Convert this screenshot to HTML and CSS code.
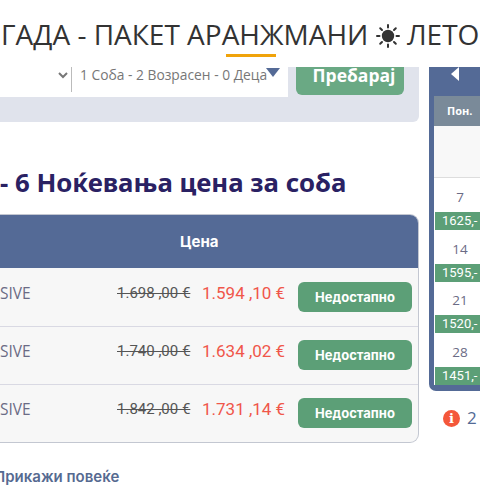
FILE: index.html
```html
<!DOCTYPE html>
<html lang="mk">
<head>
<meta charset="utf-8">
<title>Пакет аранжмани</title>
<link rel="stylesheet" href="styles.css">
</head>
<body>
<div class="page">
  <header class="title-block">
    <h1 class="title">ГАДА - ПАКЕТ АРАНЖМАНИ <svg class="sun" viewBox="0 0 24 24" width="24" height="24"><circle cx="12" cy="12" r="6.200" fill="#333"/><g stroke="#333" stroke-width="2" stroke-linecap="round"><path d="M12 1v2.500M12 20.500v2.500M1 12h2.500M20.500 12H23M4.200 4.200 6 6M18 18l1.800 1.800M4.200 19.800 6 18M18 6l1.800-1.800"/></g></svg> ЛЕТО</h1>
    <div class="title-rule"></div>
  </header>
  <div class="columns">
    <main class="main">
      <section class="search">
        <div class="search-row">
          <div class="search-field">
            <svg class="chevron" viewBox="0 0 10 7" width="10" height="7"><path d="M1 1l4 4 4-4" fill="none" stroke="#777" stroke-width="2"/></svg>
            <span class="divider"></span>
            <span class="rooms">1 Соба - 2 Возрасен - 0 Деца</span>
            <span class="triangle"></span>
          </div>
          <button class="search-btn">Пребарај</button>
        </div>
      </section>
      <h2 class="heading">- 6 Ноќевања цена за соба</h2>
      <section class="table">
        <div class="table-head"><span>Цена</span></div>
        <div class="table-row">
          <span class="board">SIVE</span>
          <span class="old">1.698 ,00 €</span>
          <span class="new">1.594 ,10 €</span>
          <button class="na">Недостапно</button>
        </div>
        <div class="table-row">
          <span class="board">SIVE</span>
          <span class="old">1.740 ,00 €</span>
          <span class="new">1.634 ,02 €</span>
          <button class="na">Недостапно</button>
        </div>
        <div class="table-row">
          <span class="board">SIVE</span>
          <span class="old">1.842 ,00 €</span>
          <span class="new">1.731 ,14 €</span>
          <button class="na">Недостапно</button>
        </div>
      </section>
      <a class="more">Прикажи повеќе</a>
    </main>
    <aside class="aside">
      <div class="calendar">
        <div class="cal-nav"><span class="arrow"></span></div>
        <div class="cal-day-name">Пон.</div>
        <div class="cal-empty"></div>
        <div class="cal-cell"><span class="num">7</span><span class="price">1625,-</span></div>
        <div class="cal-cell"><span class="num">14</span><span class="price">1595,-</span></div>
        <div class="cal-cell"><span class="num">21</span><span class="price">1520,-</span></div>
        <div class="cal-cell"><span class="num">28</span><span class="price">1451,-</span></div>
      </div>
      <div class="note">
        <span class="info">i</span>
        <span class="note-text">2</span>
      </div>
    </aside>
  </div>
</div>
</body>
</html>
```
FILE: styles.css
```css
html, body {
  margin: 0;
  padding: 0;
  background: #fff;
}
.page {
  width: 480px;
  height: 502px;
  overflow: hidden;
  font-family: "Open Sans", sans-serif;
}
.title-block {
  height: 67px;
  padding-top: 16px;
  box-sizing: border-box;
}
.title {
  margin: 0 0 0 1px;
  font-size: 28px;
  line-height: 37px;
  font-weight: 400;
  color: #333;
  white-space: nowrap;
}
.sun {
  vertical-align: -3px;
}
.title-rule {
  width: 50px;
  height: 3px;
  margin: 1px 0 0 226px;
  background: #f0a30a;
}
.columns {
  display: flex;
  gap: 10px;
  width: 480px;
}
.main {
  flex: 0 0 419px;
}
.search {
  height: 55px;
  background: #e0e3ec;
  border-bottom-right-radius: 6px;
}
.search-row {
  display: flex;
  gap: 8px;
}
.search-field {
  display: flex;
  width: 288px;
  height: 30px;
  padding: 0 7px 0 58px;
  box-sizing: border-box;
  background: #fff;
  position: relative;
}
.chevron {
  margin: 5px 3px 0 0;
}
.divider {
  width: 1px;
  height: 25px;
  background: #bbb;
}
.rooms {
  margin-left: 8px;
  font-size: 13.800px;
  line-height: 16px;
  color: #777;
  white-space: nowrap;
}
.triangle {
  position: absolute;
  left: 266px;
  top: 1px;
  border-style: solid;
  border-width: 9px 7.500px 0;
  border-color: #546a96 transparent transparent;
}
.search-btn {
  width: 108px;
  height: 28px;
  padding: 0 0 12px 8px;
  border: 0;
  border-radius: 0 0 6px 6px;
  background: #6aa984;
  color: #fff;
  font-family: "Open Sans", sans-serif;
  font-size: 17.500px;
  line-height: 16px;
  font-weight: 700;
  overflow: hidden;
}
.heading {
  margin: 43px 0 15px;
  font-family: "Noto Sans", sans-serif;
  font-size: 25.800px;
  line-height: 34px;
  font-weight: 700;
  color: #2a2163;
  white-space: nowrap;
}
.table {
  border: 1px solid #c3c7d1;
  border-left: 0;
  border-radius: 0 9px 9px 0;
  overflow: hidden;
  background: #f7f7f7;
}
.table-head {
  height: 53px;
  display: flex;
  align-items: center;
  padding-left: 180px;
  background: #546a96;
  color: #fff;
  font-family: Inter, sans-serif;
  font-size: 15px;
  font-weight: 700;
}
.table-row {
  display: flex;
  align-items: center;
  height: 58px;
  padding: 0 6px 0 0;
  box-sizing: border-box;
}
.table-row + .table-row {
  border-top: 1px solid #d9d9e3;
  padding-bottom: 1px;
}
.board {
  width: 117px;
  padding-bottom: 9px;
  font-size: 15.500px;
  color: #6b6b85;
}
.old {
  width: 85px;
  padding-bottom: 8px;
  font-family: Roboto, sans-serif;
  font-size: 15px;
  color: #555;
  text-decoration: line-through;
  white-space: nowrap;
}
.new {
  width: 96px;
  padding-bottom: 8px;
  font-family: Roboto, sans-serif;
  font-size: 17px;
  color: #f0564a;
  white-space: nowrap;
}
.na {
  width: 114px;
  height: 30px;
  padding: 0;
  border: 0;
  border-radius: 6px;
  background: #5c9f77;
  color: #fff;
  font-family: Inter, sans-serif;
  font-size: 13px;
  font-weight: 700;
}
.more {
  display: block;
  margin: 24px 0 0 -6px;
  font-family: Inter, sans-serif;
  font-size: 15px;
  font-weight: 600;
  color: #566a91;
}
.aside {
  flex: 0 0 51px;
}
.calendar {
  width: 60px;
  padding: 0 0 6px 5px;
  box-sizing: border-box;
  background: #546a96;
  border-bottom-left-radius: 7px;
}
.cal-nav {
  height: 29px;
  padding: 0 0 0 17px;
  box-sizing: border-box;
}
.arrow {
  display: block;
  width: 8px;
  height: 14px;
  background: #fff;
  clip-path: polygon(100% 0, 100% 100%, 0 50%);
}
.cal-day-name {
  height: 30px;
  background: #7a8a99;
  color: #fff;
  font-size: 11px;
  line-height: 30px;
  font-weight: 700;
  padding-left: 13px;
}
.cal-empty {
  height: 52px;
  background: #f8f8f8;
  border-bottom: 1px solid #ddd;
  box-sizing: border-box;
}
.cal-cell {
  background: #fff;
  height: 51.750px;
  display: flex;
  flex-direction: column;
  justify-content: flex-end;
  padding-left: 1px;
}
.num {
  width: 50px;
  font-size: 13.500px;
  line-height: 18px;
  color: #6b6b85;
  text-align: center;
  margin-bottom: 6px;
}
.price {
  height: 18px;
  padding-left: 7px;
  background: #5c9f77;
  color: #fff;
  font-family: Roboto, sans-serif;
  font-size: 13px;
  line-height: 18px;
  white-space: nowrap;
}
.note {
  display: flex;
  align-items: center;
  gap: 7px;
  margin: 17px 0 0 14px;
}
.info {
  width: 17px;
  height: 17px;
  border-radius: 50%;
  background: #f4573a;
  color: #fff;
  font-family: "DejaVu Serif", serif;
  font-size: 13px;
  font-weight: 700;
  line-height: 17px;
  text-align: center;
}
.note-text {
  font-size: 17px;
  line-height: 20px;
  color: #546a96;
}
```
